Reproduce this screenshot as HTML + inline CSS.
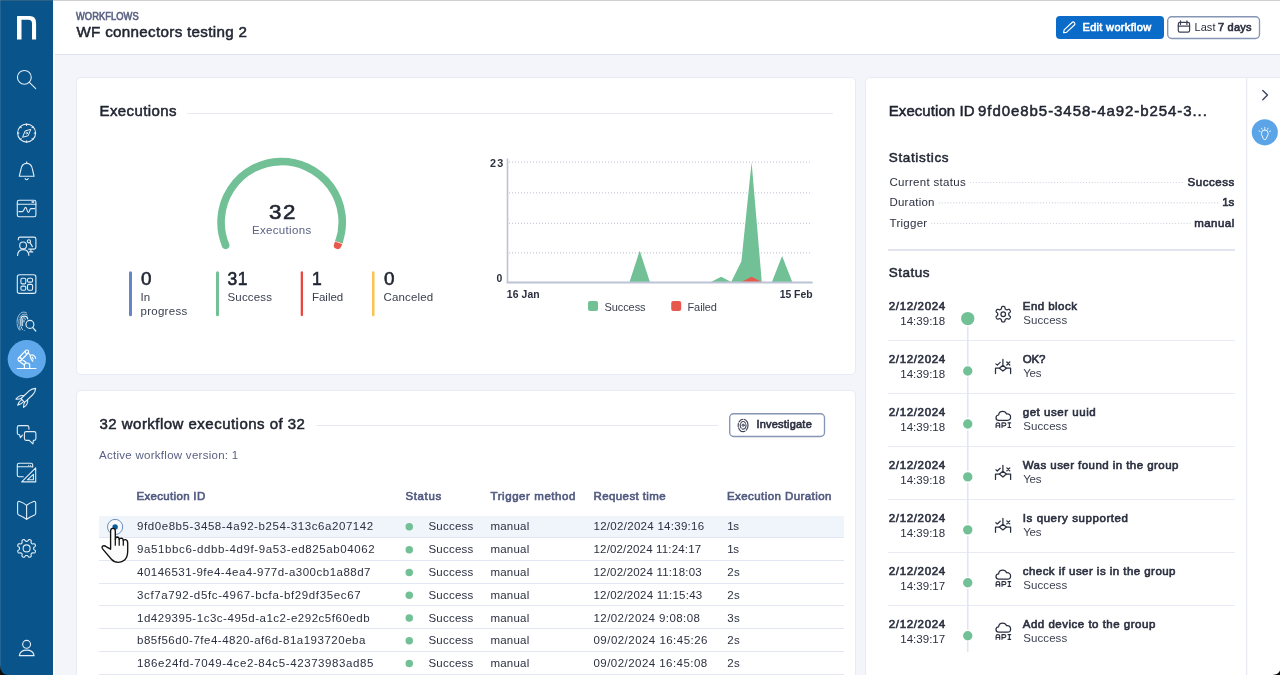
<!DOCTYPE html>
<html lang="en">
<head>
<meta charset="utf-8">
<title>WF connectors testing 2</title>
<style>
*{box-sizing:border-box;margin:0;padding:0}
html,body{width:1280px;height:675px;overflow:hidden;background:#f4f5fa;font-family:"Liberation Sans",sans-serif}
#app{position:relative;width:1280px;height:675px;overflow:hidden;background:#f4f5fa}
.abs{position:absolute}
#sidebar{left:0;top:0;width:53px;height:675px;background:#09558b}
#sidegap{left:53px;top:54px;width:2px;height:621px;background:#fff}
#header{left:53px;top:0;width:1227px;height:55px;background:#fff;border-bottom:1px solid #dde1ea}
#topline{left:0;top:0;width:1280px;height:1px;background:rgba(120,120,120,.35)}
.card{background:#fff;border:1px solid #e8eaf4;border-radius:5px}
#card1{left:76px;top:77px;width:780px;height:298px}
#card2{left:76px;top:390px;width:780px;height:300px}
#panel{left:865px;top:77px;width:420px;height:610px;border-radius:5px 0 0 0}
#rail{left:1246px;top:78px;width:1.6px;height:597px;background:#ebedf7}
.btn{border-radius:4px;height:23px}
#btnEdit{left:1056px;top:16px;width:108px;background:#0b6bc8}
#btnLast{left:1167px;top:16px;width:93px;background:#fff}
#btnInv{left:729px;top:413px;width:96px;height:24px;background:#fff;border-radius:4px}
.row{left:99px;width:745px;height:1px;background:#e3e7f3}
#rowsel{left:99px;top:516px;width:745px;height:21.5px;background:#f0f4fb}
.t{position:absolute;white-space:nowrap;line-height:1;display:block}
#txt{left:0;top:0;width:1280px;height:675px;will-change:transform}
#shapes{left:0;top:0;width:1280px;height:675px}
#corners{left:0;top:0;width:1280px;height:675px}
</style>
</head>
<body>
<div id="app">
<div id="sidebar" class="abs"></div>
<div id="header" class="abs"></div>
<div id="sidegap" class="abs"></div>
<div id="card1" class="abs card"></div>
<div id="card2" class="abs card"></div>
<div id="panel" class="abs card"></div>
<div id="btnEdit" class="abs btn"></div>
<div id="btnLast" class="abs btn"></div>
<div id="btnInv" class="abs"></div>
<div id="rowsel" class="abs"></div>
<div class="abs row" style="top:537.20px"></div><div class="abs row" style="top:559.95px"></div><div class="abs row" style="top:582.70px"></div><div class="abs row" style="top:605.45px"></div><div class="abs row" style="top:628.20px"></div><div class="abs row" style="top:650.95px"></div><div class="abs row" style="top:673.70px"></div>
<svg id="shapes" class="abs" viewBox="0 0 1280 675">
<path d="M17 39.5V16.3L18 15.9H29.3Q36.1 15.7 36.1 23V39.5H32V23.4Q32 19.7 28.4 19.7H21.5V39.5Z" fill="#fff"/>
<g stroke="#e4edf6" stroke-width="1.1" fill="none" stroke-linecap="round" stroke-linejoin="round"><circle cx="24.35" cy="77.35" r="6.9"/><path d="M29.4 82.4L35.7 88.7"/></g>
<g stroke="#e4edf6" stroke-width="1.1" fill="none" stroke-linecap="round" stroke-linejoin="round"><circle cx="26.6" cy="133.1" r="9"/><path d="M35.60 133.10L34.30 133.10M32.96 139.46L32.04 138.54M26.60 142.10L26.60 140.80M20.24 139.46L21.16 138.54M17.60 133.10L18.90 133.10M20.24 126.74L21.16 127.66M26.60 124.10L26.60 125.40M32.96 126.74L32.04 127.66" stroke-width="1.1"/><path d="M22.7 136.9L25.1 130.9L30.8 129.4L28.3 135.4Z" stroke-width="1"/><circle cx="26.7" cy="133.1" r=".9" stroke-width=".8"/></g>
<g stroke="#e4edf6" stroke-width="1.1" fill="none" stroke-linecap="round" stroke-linejoin="round"><path d="M19.3 176.3H34.1L32.5 169.5C32 165.5 29.6 163.4 26.7 163.4C23.8 163.4 21.4 165.5 20.9 169.5Z"/><path d="M26.7 163.4V161.8M25.1 178.6Q26.7 180.9 28.2 178.6"/></g>
<g stroke="#e4edf6" stroke-width="1.1" fill="none" stroke-linecap="round" stroke-linejoin="round"><rect x="17.3" y="200.3" width="18.6" height="16.4" rx="1.8"/><path d="M17.3 204.3H35.9"/><rect x="31.6" y="201.2" width="2.6" height="1.6" fill="#eaf1f8" stroke="none"/><path d="M18.9 211.6H22.4C24 211.6 24.4 207.4 25.6 207.4C27 207.4 27.1 212.5 28.3 212.5C29.5 212.5 29.6 208.6 31 208.6H34.6"/></g>
<g stroke="#e4edf6" stroke-width="1.1" fill="none" stroke-linecap="round" stroke-linejoin="round"><path d="M18.3 239.8V238.9Q18.3 237.1 20.1 237.1H34.1Q35.9 237.1 35.9 238.9V247.3Q35.9 249.1 34.1 249.1H28.6M30.9 249.1V251.9M29.4 251.9H32.8"/><circle cx="23.1" cy="245.4" r="3.4"/><path d="M17.6 255.5C17.8 251.7 20 249.6 23.2 249.6C26.4 249.6 28.6 251.7 28.9 255.5"/><circle cx="28.9" cy="241.3" r="1.6" stroke-width="1.1"/><path d="M30 242.6L32.4 246.6"/></g>
<g stroke="#e4edf6" stroke-width="1.1" fill="none" stroke-linecap="round" stroke-linejoin="round"><rect x="17.3" y="274.7" width="18.6" height="18.7" rx="2.2"/><rect x="20.9" y="278.3" width="4.9" height="5.6" rx="1.4" stroke-width="1.1"/><rect x="20.9" y="286.1" width="4.9" height="4.1" rx="1.4" stroke-width="1.1"/><rect x="27.5" y="278.3" width="5.1" height="3.8" rx="1.4" stroke-width="1.1"/><rect x="27.5" y="284.4" width="5.1" height="5.8" rx="1.4" stroke-width="1.1"/></g>
<g stroke="#e4edf6" fill="none" stroke-linecap="round" stroke-linejoin="round" stroke-width=".8"><path d="M19.6 330.2C18.2 328.6 17.4 326.4 17.1 323.6C16.6 317.6 19.4 312.1 23.8 312.1C24.9 312.1 26 312.4 26.9 313" stroke-dasharray="7 1.4 9 1.4 6" opacity=".85"/><path d="M20.2 329.6C19.3 327.4 18.9 324.6 18.9 321.8C18.9 317.6 21.2 314.1 24.4 314.1C26.7 314.1 28.6 315.5 29.6 317.8" stroke-dasharray="4 1.6 5 1.6 9" opacity=".8"/><path d="M20.9 325.8V319.6C20.9 317.2 22.4 316 24.3 316C26.1 316 27.5 317.1 27.7 318.9" stroke-width="1.25"/><path d="M22.6 325.8V320C22.6 318.4 23.1 317.7 23.9 317.7C24.6 317.7 25.2 318.3 25.3 319.4" stroke-width=".85"/><path d="M24 320.2V322M21.3 327.2C21.6 328.1 22 328.9 22.5 329.5M24.4 330.6L24.5 330.7" stroke-width=".9"/><circle cx="29.9" cy="324.4" r="3.95" stroke-width="1.15"/><path d="M32.8 327.6L35.7 330.9" stroke-width="1.4"/></g>
<circle cx="26.8" cy="359.2" r="19.1" fill="#5fa8ec"/>
<g stroke="#fff" stroke-width="1.15" fill="none" stroke-linecap="round" stroke-linejoin="round"><path d="M17.3 368.5H36M24.4 368.5V365.2Q24.4 363 27 363Q29.7 363 29.7 365.2V368.5"/><path d="M18.5 358L25.6 350.6M21 360.5L28.1 353M18.6 360.8L24.4 365M20.9 358.2L26 362.5"/><circle cx="19.7" cy="359.3" r="1.75"/><circle cx="26.9" cy="351.7" r="1.75"/><path d="M28.4 352.9L30.3 355.4M30.2 356.6C30.6 355 32.2 354.4 33.4 355.3C34.6 356.1 35.6 357 35.7 358.4M30.6 357.5C31 359 31.8 360.2 32.9 361.2M32.3 357.2L33.2 358.9"/></g>
<g transform="translate(26.9 396.6) rotate(47)" stroke="#e4edf6" stroke-width="1.1" fill="none" stroke-linecap="round" stroke-linejoin="round"><path d="M-2.6 5.6V-5.5C-2.6 -8.2 -1.4 -10.4 0 -12C1.4 -10.4 2.6 -8.2 2.6 -5.5V5.6Z"/><path d="M-2.6 1.5C-5 3 -6.2 6.2 -5.6 9.8C-4.2 8.6 -3.2 7.3 -2.6 5.6M2.6 1.5C5 3 6.2 6.2 5.6 9.8C4.2 8.6 3.2 7.3 2.6 5.6M-1.3 5.8C-1.8 8.2 -1.1 10.8 0 12.6C1.1 10.8 1.8 8.2 1.3 5.8"/></g>
<g stroke="#e4edf6" stroke-width="1.1" fill="none" stroke-linecap="round" stroke-linejoin="round"><path d="M28.9 429.3V427.4Q28.9 425.6 27.1 425.6H19.1Q17.3 425.6 17.3 427.4V432.9Q17.3 434.7 19.1 434.7H19.5L20.4 437.7L22.4 435.2"/><path d="M26.2 431.6H34.1Q35.9 431.6 35.9 433.4V438.6Q35.9 440.4 34.1 440.4H33.4L32.9 443.9L29.2 440.4H26.2Q24.4 440.4 24.4 438.6V433.4Q24.4 431.6 26.2 431.6Z"/></g>
<g stroke="#e4edf6" stroke-width="1.1" fill="none" stroke-linecap="round" stroke-linejoin="round"><path d="M23.3 476.7H19.1Q17.3 476.7 17.3 474.9V465.1Q17.3 463.3 19.1 463.3H30.9Q32.7 463.3 32.7 465.1V467.1M17.3 466.8H32.7"/><path d="M35.7 467.8V481.9H21.7ZM33.4 474.4V479.8H27.4Z"/><circle cx="28.6" cy="465.2" r=".55" fill="#eaf1f8" stroke="none"/><circle cx="30.4" cy="465.2" r=".55" fill="#eaf1f8" stroke="none"/></g>
<g stroke="#e4edf6" stroke-width="1.1" fill="none" stroke-linecap="round" stroke-linejoin="round"><path d="M26.6 505.3V519.4M26.6 505.3C24.5 503.5 22 502.3 19.6 501.5C18.4 501.1 17.6 501.8 17.6 502.9V513.2C17.6 514 18 514.5 18.8 514.9C21.5 516 24.2 517.5 26.6 519.4C29 517.5 31.7 516 34.5 514.9C35.3 514.5 35.7 514 35.7 513.2V502.9C35.7 501.8 34.9 501.1 33.7 501.5C31.3 502.3 28.8 503.5 26.6 505.3"/></g>
<g stroke="#e4edf6" stroke-width="1.1" fill="none" stroke-linecap="round" stroke-linejoin="round"><path d="M33.65 548.40 L33.65 548.58 L33.66 548.77 L33.68 548.96 L33.72 549.15 L33.83 549.35 L34.05 549.58 L34.42 549.85 L34.86 550.16 L35.21 550.47 L35.40 550.76 L35.46 551.02 L35.45 551.27 L35.40 551.52 L35.33 551.75 L35.24 551.98 L35.14 552.20 L35.02 552.42 L34.89 552.62 L34.72 552.81 L34.49 552.95 L34.15 553.03 L33.68 553.00 L33.16 552.91 L32.70 552.83 L32.38 552.84 L32.16 552.91 L32.00 553.01 L31.85 553.13 L31.72 553.26 L31.59 553.39 L31.46 553.52 L31.33 553.65 L31.21 553.80 L31.11 553.96 L31.04 554.18 L31.03 554.50 L31.11 554.96 L31.20 555.48 L31.23 555.95 L31.15 556.29 L31.01 556.52 L30.82 556.69 L30.62 556.82 L30.40 556.94 L30.18 557.04 L29.95 557.13 L29.72 557.20 L29.47 557.25 L29.22 557.26 L28.96 557.20 L28.67 557.01 L28.36 556.66 L28.05 556.22 L27.78 555.85 L27.55 555.63 L27.35 555.52 L27.16 555.48 L26.97 555.46 L26.78 555.45 L26.60 555.45 L26.42 555.45 L26.23 555.46 L26.04 555.48 L25.85 555.52 L25.65 555.63 L25.42 555.85 L25.15 556.22 L24.84 556.66 L24.53 557.01 L24.24 557.20 L23.98 557.26 L23.73 557.25 L23.48 557.20 L23.25 557.13 L23.02 557.04 L22.80 556.94 L22.58 556.82 L22.38 556.69 L22.19 556.52 L22.05 556.29 L21.97 555.95 L22.00 555.48 L22.09 554.96 L22.17 554.50 L22.16 554.18 L22.09 553.96 L21.99 553.80 L21.87 553.65 L21.74 553.52 L21.61 553.39 L21.48 553.26 L21.35 553.13 L21.20 553.01 L21.04 552.91 L20.82 552.84 L20.50 552.83 L20.04 552.91 L19.52 553.00 L19.05 553.03 L18.71 552.95 L18.48 552.81 L18.31 552.62 L18.18 552.42 L18.06 552.20 L17.96 551.98 L17.87 551.75 L17.80 551.52 L17.75 551.27 L17.74 551.02 L17.80 550.76 L17.99 550.47 L18.34 550.16 L18.78 549.85 L19.15 549.58 L19.37 549.35 L19.48 549.15 L19.52 548.96 L19.54 548.77 L19.55 548.58 L19.55 548.40 L19.55 548.22 L19.54 548.03 L19.52 547.84 L19.48 547.65 L19.37 547.45 L19.15 547.22 L18.78 546.95 L18.34 546.64 L17.99 546.33 L17.80 546.04 L17.74 545.78 L17.75 545.53 L17.80 545.28 L17.87 545.05 L17.96 544.82 L18.06 544.60 L18.18 544.38 L18.31 544.18 L18.48 543.99 L18.71 543.85 L19.05 543.77 L19.52 543.80 L20.04 543.89 L20.50 543.97 L20.82 543.96 L21.04 543.89 L21.20 543.79 L21.35 543.67 L21.48 543.54 L21.61 543.41 L21.74 543.28 L21.87 543.15 L21.99 543.00 L22.09 542.84 L22.16 542.62 L22.17 542.30 L22.09 541.84 L22.00 541.32 L21.97 540.85 L22.05 540.51 L22.19 540.28 L22.38 540.11 L22.58 539.98 L22.80 539.86 L23.02 539.76 L23.25 539.67 L23.48 539.60 L23.73 539.55 L23.98 539.54 L24.24 539.60 L24.53 539.79 L24.84 540.14 L25.15 540.58 L25.42 540.95 L25.65 541.17 L25.85 541.28 L26.04 541.32 L26.23 541.34 L26.42 541.35 L26.60 541.35 L26.78 541.35 L26.97 541.34 L27.16 541.32 L27.35 541.28 L27.55 541.17 L27.78 540.95 L28.05 540.58 L28.36 540.14 L28.67 539.79 L28.96 539.60 L29.22 539.54 L29.47 539.55 L29.72 539.60 L29.95 539.67 L30.18 539.76 L30.40 539.86 L30.62 539.98 L30.82 540.11 L31.01 540.28 L31.15 540.51 L31.23 540.85 L31.20 541.32 L31.11 541.84 L31.03 542.30 L31.04 542.62 L31.11 542.84 L31.21 543.00 L31.33 543.15 L31.46 543.28 L31.59 543.41 L31.72 543.54 L31.85 543.67 L32.00 543.79 L32.16 543.89 L32.38 543.96 L32.70 543.97 L33.16 543.89 L33.68 543.80 L34.15 543.77 L34.49 543.85 L34.72 543.99 L34.89 544.18 L35.02 544.38 L35.14 544.60 L35.24 544.82 L35.33 545.05 L35.40 545.28 L35.45 545.53 L35.46 545.78 L35.40 546.04 L35.21 546.33 L34.86 546.64 L34.42 546.95 L34.05 547.22 L33.83 547.45 L33.72 547.65 L33.68 547.84 L33.66 548.03 L33.65 548.22Z"/><circle cx="26.6" cy="548.4" r="3.5"/></g>
<g stroke="#e4edf6" stroke-width="1.1" fill="none" stroke-linecap="round" stroke-linejoin="round"><circle cx="26.6" cy="644.35" r="3.95"/><path d="M19.3 655.6C19.9 652.2 22.8 650.1 26.7 650.1C30.6 650.1 33.5 652.2 34.1 655.6Z"/></g>
<rect x="0" y="0" width="1" height="675" fill="#fff" opacity=".1"/><path d="M187.5 113.5H833M316.5 425.5H718" stroke="#e6e8f3" stroke-width="1" fill="none"/>
<path d="M339.28 240.88 A60.6 60.6 0 0 1 337.64 245.34" stroke="#e9584d" stroke-width="7.6" stroke-linecap="round" fill="none"/>
<path d="M225.66 245.34 A60.6 60.6 0 1 1 338.88 242.08" stroke="#72c096" stroke-width="7.6" fill="none"/>
<circle cx="225.66" cy="245.34" r="3.8" fill="#72c096"/>
<path d="M338.88 242.08 A60.6 60.6 0 0 1 338.60 242.88" stroke="#fff" stroke-width="8.6" fill="none" opacity=".85"/>
<rect x="129" y="271.2" width="3" height="45" rx="1.5" fill="#6585c7"/>
<rect x="216" y="271.2" width="3" height="45" rx="1.5" fill="#72c096"/>
<rect x="300.7" y="271.2" width="2.3" height="45" rx="1.1" fill="#e8483f"/>
<rect x="372" y="271.2" width="2.5" height="45" rx="1.2" fill="#f9c550"/>
<path d="M509 162.2H811.8" stroke="#c7ccd9" stroke-width="1.2" stroke-dasharray="1 2" fill="none"/>
<path d="M509 192.8H811.8" stroke="#c7ccd9" stroke-width="1.2" stroke-dasharray="1 2" fill="none"/>
<path d="M509 223.4H811.8" stroke="#c7ccd9" stroke-width="1.2" stroke-dasharray="1 2" fill="none"/>
<path d="M509 252.9H811.8" stroke="#c7ccd9" stroke-width="1.2" stroke-dasharray="1 2" fill="none"/>
<path d="M507.5 282.0 L517.7 282.0 L527.8 282.0 L538.0 282.0 L548.2 282.0 L558.4 282.0 L568.5 282.0 L578.7 282.0 L588.9 282.0 L599.0 282.0 L609.2 282.0 L619.4 282.0 L629.5 282.0 L639.7 250.7 L649.9 282.0 L660.0 282.0 L670.2 282.0 L680.4 282.0 L690.6 282.0 L700.7 282.0 L710.9 282.0 L721.1 276.8 L731.2 282.0 L741.4 261.2 L751.6 162.2 L761.8 282.0 L771.9 282.0 L782.1 256.0 L792.3 282.0 L802.4 282.0 L812.6 282.0 L812.6 282 L507.5 282Z" fill="#72c096"/>
<path d="M741.4 282 L751.6 276.8 L761.8 282Z" fill="#e9584d"/>
<path d="M507.5 158.5V283" stroke="#bcc3d6" stroke-width="1.6" fill="none"/>
<path d="M506.7 282.4H812.6" stroke="#bcc3d6" stroke-width="2" fill="none"/>
<rect x="588" y="301" width="10" height="10" rx="2" fill="#72c096"/>
<rect x="671.2" y="301" width="10" height="10" rx="2" fill="#e9584d"/>
<circle cx="409.25" cy="526.75" r="3.75" fill="#72c096"/>
<circle cx="409.25" cy="549.80" r="3.75" fill="#72c096"/>
<circle cx="409.25" cy="572.55" r="3.75" fill="#72c096"/>
<circle cx="409.25" cy="595.30" r="3.75" fill="#72c096"/>
<circle cx="409.25" cy="618.05" r="3.75" fill="#72c096"/>
<circle cx="409.25" cy="640.80" r="3.75" fill="#72c096"/>
<circle cx="409.25" cy="663.55" r="3.75" fill="#72c096"/>
<circle cx="115.1" cy="526.95" r="7.6" fill="#f8fafe" stroke="#6a8fbd" stroke-width="1"/>
<circle cx="115.1" cy="526.95" r="2.7" fill="#0b5a9a"/>
<path d="M970 182.5H1184" stroke="#cfd3e0" stroke-width="1.2" stroke-dasharray="1 1.9" fill="none"/>
<path d="M938.75 202.9H1218.5" stroke="#cfd3e0" stroke-width="1.2" stroke-dasharray="1 1.9" fill="none"/>
<path d="M931.25 223.5H1191" stroke="#cfd3e0" stroke-width="1.2" stroke-dasharray="1 1.9" fill="none"/>
<path d="M888 250H1235" stroke="#d9dcea" stroke-width="1.6" fill="none"/>
<path d="M888 340.50H1235" stroke="#e8eaf5" stroke-width="1.2" fill="none"/>
<path d="M888 393.50H1235" stroke="#e8eaf5" stroke-width="1.2" fill="none"/>
<path d="M888 446.50H1235" stroke="#e8eaf5" stroke-width="1.2" fill="none"/>
<path d="M888 499.50H1235" stroke="#e8eaf5" stroke-width="1.2" fill="none"/>
<path d="M888 552.50H1235" stroke="#e8eaf5" stroke-width="1.2" fill="none"/>
<path d="M888 605.50H1235" stroke="#e8eaf5" stroke-width="1.2" fill="none"/>
<path d="M967.75 318V652" stroke="#e1e4f2" stroke-width="1.6" fill="none"/>
<circle cx="967.75" cy="318.6" r="7.4" fill="#72c096" stroke="#fff" stroke-width="1.4"/>
<circle cx="967.75" cy="371.00" r="5.4" fill="#72c096" stroke="#fff" stroke-width="1.4"/>
<circle cx="967.75" cy="423.95" r="5.4" fill="#72c096" stroke="#fff" stroke-width="1.4"/>
<circle cx="967.75" cy="476.90" r="5.4" fill="#72c096" stroke="#fff" stroke-width="1.4"/>
<circle cx="967.75" cy="529.85" r="5.4" fill="#72c096" stroke="#fff" stroke-width="1.4"/>
<circle cx="967.75" cy="582.80" r="5.4" fill="#72c096" stroke="#fff" stroke-width="1.4"/>
<circle cx="967.75" cy="635.75" r="5.4" fill="#72c096" stroke="#fff" stroke-width="1.4"/>
<path d="M1008.75 314.20 L1008.75 314.34 L1008.75 314.49 L1008.75 314.63 L1008.76 314.78 L1008.77 314.93 L1008.82 315.08 L1008.91 315.25 L1009.07 315.44 L1009.34 315.66 L1009.67 315.92 L1010.00 316.20 L1010.24 316.47 L1010.36 316.72 L1010.40 316.95 L1010.39 317.16 L1010.34 317.36 L1010.27 317.55 L1010.19 317.74 L1010.10 317.92 L1010.00 318.10 L1009.90 318.27 L1009.79 318.44 L1009.66 318.61 L1009.53 318.76 L1009.38 318.90 L1009.21 319.02 L1008.99 319.10 L1008.71 319.12 L1008.36 319.05 L1007.95 318.90 L1007.56 318.74 L1007.23 318.62 L1006.99 318.57 L1006.80 318.58 L1006.64 318.62 L1006.50 318.68 L1006.38 318.75 L1006.25 318.82 L1006.12 318.89 L1006.00 318.96 L1005.88 319.03 L1005.75 319.11 L1005.63 319.18 L1005.50 319.26 L1005.38 319.35 L1005.27 319.46 L1005.17 319.62 L1005.09 319.86 L1005.03 320.20 L1004.97 320.62 L1004.89 321.05 L1004.78 321.39 L1004.63 321.62 L1004.45 321.77 L1004.26 321.86 L1004.06 321.92 L1003.86 321.96 L1003.66 321.98 L1003.45 322.00 L1003.25 322.00 L1003.05 322.00 L1002.84 321.98 L1002.64 321.96 L1002.44 321.92 L1002.24 321.86 L1002.05 321.77 L1001.87 321.62 L1001.72 321.39 L1001.61 321.05 L1001.53 320.62 L1001.47 320.20 L1001.41 319.86 L1001.33 319.62 L1001.23 319.46 L1001.12 319.35 L1001.00 319.26 L1000.87 319.18 L1000.75 319.11 L1000.62 319.03 L1000.50 318.96 L1000.38 318.89 L1000.25 318.82 L1000.12 318.75 L1000.00 318.68 L999.86 318.62 L999.70 318.58 L999.51 318.57 L999.27 318.62 L998.94 318.74 L998.55 318.90 L998.14 319.05 L997.79 319.12 L997.51 319.10 L997.29 319.02 L997.12 318.90 L996.97 318.76 L996.84 318.61 L996.71 318.44 L996.60 318.27 L996.50 318.10 L996.40 317.92 L996.31 317.74 L996.23 317.55 L996.16 317.36 L996.11 317.16 L996.10 316.95 L996.14 316.72 L996.26 316.47 L996.50 316.20 L996.83 315.92 L997.16 315.66 L997.43 315.44 L997.59 315.25 L997.68 315.08 L997.73 314.93 L997.74 314.78 L997.75 314.63 L997.75 314.49 L997.75 314.34 L997.75 314.20 L997.75 314.06 L997.75 313.91 L997.75 313.77 L997.74 313.62 L997.73 313.47 L997.68 313.32 L997.59 313.15 L997.43 312.96 L997.16 312.74 L996.83 312.48 L996.50 312.20 L996.26 311.93 L996.14 311.68 L996.10 311.45 L996.11 311.24 L996.16 311.04 L996.23 310.85 L996.31 310.66 L996.40 310.48 L996.50 310.30 L996.60 310.13 L996.71 309.96 L996.84 309.79 L996.97 309.64 L997.12 309.50 L997.29 309.38 L997.51 309.30 L997.79 309.28 L998.14 309.35 L998.55 309.50 L998.94 309.66 L999.27 309.78 L999.51 309.83 L999.70 309.82 L999.86 309.78 L1000.00 309.72 L1000.12 309.65 L1000.25 309.58 L1000.38 309.51 L1000.50 309.44 L1000.62 309.37 L1000.75 309.29 L1000.87 309.22 L1001.00 309.14 L1001.12 309.05 L1001.23 308.94 L1001.33 308.78 L1001.41 308.54 L1001.47 308.20 L1001.53 307.78 L1001.61 307.35 L1001.72 307.01 L1001.87 306.78 L1002.05 306.63 L1002.24 306.54 L1002.44 306.48 L1002.64 306.44 L1002.84 306.42 L1003.05 306.40 L1003.25 306.40 L1003.45 306.40 L1003.66 306.42 L1003.86 306.44 L1004.06 306.48 L1004.26 306.54 L1004.45 306.63 L1004.63 306.78 L1004.78 307.01 L1004.89 307.35 L1004.97 307.78 L1005.03 308.20 L1005.09 308.54 L1005.17 308.78 L1005.27 308.94 L1005.38 309.05 L1005.50 309.14 L1005.63 309.22 L1005.75 309.29 L1005.88 309.37 L1006.00 309.44 L1006.12 309.51 L1006.25 309.58 L1006.38 309.65 L1006.50 309.72 L1006.64 309.78 L1006.80 309.82 L1006.99 309.83 L1007.23 309.78 L1007.56 309.66 L1007.95 309.50 L1008.36 309.35 L1008.71 309.28 L1008.99 309.30 L1009.21 309.38 L1009.38 309.50 L1009.53 309.64 L1009.66 309.79 L1009.79 309.96 L1009.90 310.13 L1010.00 310.30 L1010.10 310.48 L1010.19 310.66 L1010.27 310.85 L1010.34 311.04 L1010.39 311.24 L1010.40 311.45 L1010.36 311.68 L1010.24 311.93 L1010.00 312.20 L1009.67 312.48 L1009.34 312.74 L1009.07 312.96 L1008.91 313.15 L1008.82 313.32 L1008.77 313.47 L1008.76 313.62 L1008.75 313.77 L1008.75 313.91 L1008.75 314.06Z" stroke="#2b3040" stroke-width="1.25" fill="none" stroke-linecap="round" stroke-linejoin="round"/>
<circle cx="1003.25" cy="314.2" r="2.3" stroke="#2b3040" stroke-width="1.25" fill="none" stroke-linecap="round" stroke-linejoin="round"/>
<g transform="translate(0 0.00)" stroke="#2b3040" stroke-width="1.25" fill="none" stroke-linecap="round" stroke-linejoin="round"><path d="M1002.9 359.4V365.2M1002.9 365.3L1006.4 368.2L1002.9 371.1L999.4 368.2Z"/><path d="M999.4 368.2H995.5V373.5M1006.4 368.2H1010.6V373.5"/><path d="M995.9 363.9L997.3 365.1L1000.2 362.4"/><path d="M1006.8 362L1009.8 365M1009.8 362L1006.8 365"/></g>
<g transform="translate(0 105.90)" stroke="#2b3040" stroke-width="1.25" fill="none" stroke-linecap="round" stroke-linejoin="round"><path d="M1002.9 359.4V365.2M1002.9 365.3L1006.4 368.2L1002.9 371.1L999.4 368.2Z"/><path d="M999.4 368.2H995.5V373.5M1006.4 368.2H1010.6V373.5"/><path d="M995.9 363.9L997.3 365.1L1000.2 362.4"/><path d="M1006.8 362L1009.8 365M1009.8 362L1006.8 365"/></g>
<g transform="translate(0 158.85)" stroke="#2b3040" stroke-width="1.25" fill="none" stroke-linecap="round" stroke-linejoin="round"><path d="M1002.9 359.4V365.2M1002.9 365.3L1006.4 368.2L1002.9 371.1L999.4 368.2Z"/><path d="M999.4 368.2H995.5V373.5M1006.4 368.2H1010.6V373.5"/><path d="M995.9 363.9L997.3 365.1L1000.2 362.4"/><path d="M1006.8 362L1009.8 365M1009.8 362L1006.8 365"/></g>
<g transform="translate(0 0.00)" stroke="#2b3040" stroke-width="1.25" fill="none" stroke-linecap="round" stroke-linejoin="round"><path d="M998.8 420.3H1007.6C1009.6 420.3 1010.6 418.8 1010.6 417.1C1010.6 415 1008.8 413.4 1006.6 413.9C1006 412.4 1004.5 411.3 1002.7 411.3C1000.5 411.3 998.8 412.9 998.6 415C997.1 415.1 996 416.2 996 417.7C996 419.2 997.2 420.3 998.8 420.3Z"/><path stroke-width="1.15" d="M996.1 427.5V424.4Q996.1 422.8 997.9 422.8Q999.7 422.8 999.7 424.4V427.5M996.1 425.7H999.7M1002 427.5V422.8H1004.2Q1005.9 422.8 1005.9 424.3Q1005.9 425.8 1004.2 425.8H1002M1008 422.8H1010.7M1009.35 422.8V427.5M1008 427.5H1010.7"/></g>
<g transform="translate(0 158.85)" stroke="#2b3040" stroke-width="1.25" fill="none" stroke-linecap="round" stroke-linejoin="round"><path d="M998.8 420.3H1007.6C1009.6 420.3 1010.6 418.8 1010.6 417.1C1010.6 415 1008.8 413.4 1006.6 413.9C1006 412.4 1004.5 411.3 1002.7 411.3C1000.5 411.3 998.8 412.9 998.6 415C997.1 415.1 996 416.2 996 417.7C996 419.2 997.2 420.3 998.8 420.3Z"/><path stroke-width="1.15" d="M996.1 427.5V424.4Q996.1 422.8 997.9 422.8Q999.7 422.8 999.7 424.4V427.5M996.1 425.7H999.7M1002 427.5V422.8H1004.2Q1005.9 422.8 1005.9 424.3Q1005.9 425.8 1004.2 425.8H1002M1008 422.8H1010.7M1009.35 422.8V427.5M1008 427.5H1010.7"/></g>
<g transform="translate(0 211.80)" stroke="#2b3040" stroke-width="1.25" fill="none" stroke-linecap="round" stroke-linejoin="round"><path d="M998.8 420.3H1007.6C1009.6 420.3 1010.6 418.8 1010.6 417.1C1010.6 415 1008.8 413.4 1006.6 413.9C1006 412.4 1004.5 411.3 1002.7 411.3C1000.5 411.3 998.8 412.9 998.6 415C997.1 415.1 996 416.2 996 417.7C996 419.2 997.2 420.3 998.8 420.3Z"/><path stroke-width="1.15" d="M996.1 427.5V424.4Q996.1 422.8 997.9 422.8Q999.7 422.8 999.7 424.4V427.5M996.1 425.7H999.7M1002 427.5V422.8H1004.2Q1005.9 422.8 1005.9 424.3Q1005.9 425.8 1004.2 425.8H1002M1008 422.8H1010.7M1009.35 422.8V427.5M1008 427.5H1010.7"/></g>
<path d="M1246.7 78V675" stroke="#e7e9f5" stroke-width="1.2" fill="none"/>
<path d="M1262.8 90.4L1267.5 95L1262.8 99.7" stroke="#3f4463" stroke-width="1.4" fill="none" stroke-linecap="round" stroke-linejoin="round"/>
<circle cx="1264.8" cy="132.35" r="13.05" fill="#5ba4e8"/>
<g stroke="#f2f8fe" stroke-width="1" fill="none" stroke-linecap="round" stroke-linejoin="round"><path d="M1264.8 129.9A3.4 3.4 0 0 1 1268.2 133.3C1268.2 135.6 1266.8 136.4 1266.5 138.4Q1266.3 139.5 1264.8 139.5Q1263.3 139.5 1263.1 138.4C1262.8 136.4 1261.4 135.6 1261.4 133.3A3.4 3.4 0 0 1 1264.8 129.9Z"/><path stroke-width=".9" d="M1264.8 127.3V128.5M1261.5 128.2L1262.1 129.3M1268.1 128.2L1267.5 129.3M1259 131L1260.1 131.4M1270.6 131L1269.5 131.4"/></g>
<rect x="1167.7" y="16.7" width="91.8" height="21.8" rx="4" fill="none" stroke="#8595b4" stroke-width="1.35"/>
<rect x="729.7" y="413.7" width="94.8" height="22.8" rx="4" fill="none" stroke="#8595b4" stroke-width="1.35"/>
<g transform="translate(1069.4 27.3) rotate(-43)" stroke="#fff" stroke-width="1.15" fill="none" stroke-linejoin="round"><path d="M-5.6 -1.7H5.2Q6.9 -1.7 6.9 0Q6.9 1.7 5.2 1.7H-5.6L-7.9 0Z"/></g>
<g stroke="#3c4155" stroke-width="1.2" fill="none" stroke-linecap="round"><rect x="1178.3" y="22.3" width="11.3" height="9.8" rx="1.6"/><path d="M1178.3 26.2H1189.6M1180.5 20.9V24.4M1186.9 20.9V24.4"/></g>
<g stroke="#3c4155" stroke-width="1" fill="none" stroke-linecap="round"><ellipse cx="743.1" cy="425.4" rx="4.9" ry="6.2" stroke-width="1.15" stroke-dasharray="5 1.6 8 1.4 3 1.5"/><ellipse cx="743.1" cy="425.3" rx="2.9" ry="3.8" stroke-width="1.1" stroke-dasharray="6 1.3 4 1.2"/><circle cx="743.1" cy="425.2" r="1.1" /></g>
</svg>
<div id="txt" class="abs">
<span class="t" style="left:75.50px;top:12.30px;font-size:10px;font-weight:400;color:#5a6284;-webkit-text-stroke:0.59px #5a6284;letter-spacing:0.080px;transform:scaleX(0.93);transform-origin:0 0;">WORKFLOWS</span>
<span class="t" style="left:76.40px;top:24.00px;font-size:15.2px;font-weight:400;color:#1f2430;-webkit-text-stroke:0.53px #1f2430;letter-spacing:0.311px;">WF connectors testing 2</span>
<span class="t" style="left:1082.50px;top:21.50px;font-size:11px;font-weight:400;color:#ffffff;-webkit-text-stroke:0.61px #ffffff;letter-spacing:0.322px;">Edit workflow</span>
<span class="t" style="left:1194.50px;top:21.50px;font-size:11px;font-weight:400;color:#2b3040;letter-spacing:0.054px;">Last</span>
<span class="t" style="left:1218.00px;top:21.50px;font-size:11px;font-weight:400;color:#2b3040;-webkit-text-stroke:0.61px #2b3040;letter-spacing:0.208px;">7 days</span>
<span class="t" style="left:99.50px;top:103.10px;font-size:15px;font-weight:400;color:#1f2430;-webkit-text-stroke:0.53px #1f2430;letter-spacing:0.392px;">Executions</span>
<span class="t" style="left:268.50px;top:202.15px;font-size:20.3px;font-weight:400;color:#1f2430;-webkit-text-stroke:0.62px #1f2430;letter-spacing:1.454px;transform:scaleX(1.1);transform-origin:0 0;">32</span>
<span class="t" style="left:251.90px;top:224.65px;font-size:11.5px;font-weight:400;color:#5a6284;letter-spacing:0.336px;">Executions</span>
<span class="t" style="left:141.00px;top:270.75px;font-size:17.5px;font-weight:400;color:#1f2430;-webkit-text-stroke:0.57px #1f2430;letter-spacing:0.000px;transform:scaleX(1.08);transform-origin:0 0;">0</span>
<span class="t" style="left:227.50px;top:270.75px;font-size:17.5px;font-weight:400;color:#1f2430;-webkit-text-stroke:0.57px #1f2430;letter-spacing:0.581px;">31</span>
<span class="t" style="left:312.00px;top:270.75px;font-size:17.5px;font-weight:400;color:#1f2430;-webkit-text-stroke:0.57px #1f2430;letter-spacing:0.000px;">1</span>
<span class="t" style="left:383.50px;top:270.75px;font-size:17.5px;font-weight:400;color:#1f2430;-webkit-text-stroke:0.57px #1f2430;letter-spacing:0.000px;transform:scaleX(1.08);transform-origin:0 0;">0</span>
<span class="t" style="left:140.50px;top:291.50px;font-size:11.5px;font-weight:400;color:#3c4150;letter-spacing:0.096px;">In</span>
<span class="t" style="left:140.50px;top:306.25px;font-size:11.5px;font-weight:400;color:#3c4150;letter-spacing:0.277px;">progress</span>
<span class="t" style="left:227.50px;top:291.50px;font-size:11.5px;font-weight:400;color:#3c4150;letter-spacing:0.162px;">Success</span>
<span class="t" style="left:312.00px;top:291.50px;font-size:11.5px;font-weight:400;color:#3c4150;letter-spacing:-0.028px;">Failed</span>
<span class="t" style="left:383.50px;top:291.50px;font-size:11.5px;font-weight:400;color:#3c4150;letter-spacing:0.157px;">Canceled</span>
<span class="t" style="left:490.10px;top:158.70px;font-size:10.4px;font-weight:700;color:#2b3040;letter-spacing:1.153px;transform:scaleX(1.04);transform-origin:0 0;">23</span>
<span class="t" style="left:496.60px;top:274.30px;font-size:10.4px;font-weight:700;color:#2b3040;letter-spacing:0.000px;">0</span>
<span class="t" style="left:506.80px;top:290.30px;font-size:10.4px;font-weight:700;color:#2b3040;letter-spacing:0.113px;">16 Jan</span>
<span class="t" style="left:779.80px;top:290.30px;font-size:10.4px;font-weight:700;color:#2b3040;letter-spacing:-0.040px;">15 Feb</span>
<span class="t" style="left:604.50px;top:301.70px;font-size:11px;font-weight:400;color:#3c4150;letter-spacing:-0.086px;">Success</span>
<span class="t" style="left:687.50px;top:301.70px;font-size:11px;font-weight:400;color:#3c4150;letter-spacing:-0.102px;">Failed</span>
<span class="t" style="left:99.50px;top:416.10px;font-size:15px;font-weight:400;color:#1f2430;-webkit-text-stroke:0.53px #1f2430;letter-spacing:0.474px;">32 workflow executions of 32</span>
<span class="t" style="left:99.00px;top:449.50px;font-size:11.5px;font-weight:400;color:#5a6284;letter-spacing:0.276px;">Active workflow version: 1</span>
<span class="t" style="left:756.40px;top:419.00px;font-size:11px;font-weight:400;color:#2b3040;-webkit-text-stroke:0.61px #2b3040;letter-spacing:0.216px;">Investigate</span>
<span class="t" style="left:136.50px;top:490.85px;font-size:11.5px;font-weight:400;color:#525a80;-webkit-text-stroke:0.62px #525a80;letter-spacing:0.317px;">Execution ID</span>
<span class="t" style="left:405.50px;top:490.85px;font-size:11.5px;font-weight:400;color:#525a80;-webkit-text-stroke:0.62px #525a80;letter-spacing:0.616px;">Status</span>
<span class="t" style="left:490.50px;top:490.85px;font-size:11.5px;font-weight:400;color:#525a80;-webkit-text-stroke:0.62px #525a80;letter-spacing:0.567px;">Trigger method</span>
<span class="t" style="left:593.50px;top:490.85px;font-size:11.5px;font-weight:400;color:#525a80;-webkit-text-stroke:0.62px #525a80;letter-spacing:0.402px;">Request time</span>
<span class="t" style="left:727.00px;top:490.85px;font-size:11.5px;font-weight:400;color:#525a80;-webkit-text-stroke:0.62px #525a80;letter-spacing:0.428px;">Execution Duration</span>
<span class="t" style="left:137.00px;top:521.05px;font-size:11.5px;font-weight:400;color:#2b3040;letter-spacing:0.573px;">9fd0e8b5-3458-4a92-b254-313c6a207142</span>
<span class="t" style="left:428.50px;top:521.05px;font-size:11.5px;font-weight:400;color:#2b3040;letter-spacing:0.204px;">Success</span>
<span class="t" style="left:490.50px;top:521.05px;font-size:11.5px;font-weight:400;color:#2b3040;letter-spacing:0.194px;">manual</span>
<span class="t" style="left:593.50px;top:521.05px;font-size:11.5px;font-weight:400;color:#2b3040;letter-spacing:0.287px;">12/02/2024 14:39:16</span>
<span class="t" style="left:727.25px;top:521.05px;font-size:11.5px;font-weight:400;color:#2b3040;letter-spacing:-0.350px;">1s</span>
<span class="t" style="left:137.00px;top:544.40px;font-size:11.5px;font-weight:400;color:#2b3040;letter-spacing:0.616px;">9a51bbc6-ddbb-4d9f-9a53-ed825ab04062</span>
<span class="t" style="left:428.50px;top:544.40px;font-size:11.5px;font-weight:400;color:#2b3040;letter-spacing:0.204px;">Success</span>
<span class="t" style="left:490.50px;top:544.40px;font-size:11.5px;font-weight:400;color:#2b3040;letter-spacing:0.194px;">manual</span>
<span class="t" style="left:593.50px;top:544.40px;font-size:11.5px;font-weight:400;color:#2b3040;letter-spacing:0.168px;">12/02/2024 11:24:17</span>
<span class="t" style="left:727.25px;top:544.40px;font-size:11.5px;font-weight:400;color:#2b3040;letter-spacing:-0.350px;">1s</span>
<span class="t" style="left:137.00px;top:567.15px;font-size:11.5px;font-weight:400;color:#2b3040;letter-spacing:0.496px;">40146531-9fe4-4ea4-977d-a300cb1a88d7</span>
<span class="t" style="left:428.50px;top:567.15px;font-size:11.5px;font-weight:400;color:#2b3040;letter-spacing:0.204px;">Success</span>
<span class="t" style="left:490.50px;top:567.15px;font-size:11.5px;font-weight:400;color:#2b3040;letter-spacing:0.194px;">manual</span>
<span class="t" style="left:593.50px;top:567.15px;font-size:11.5px;font-weight:400;color:#2b3040;letter-spacing:0.195px;">12/02/2024 11:18:03</span>
<span class="t" style="left:727.25px;top:567.15px;font-size:11.5px;font-weight:400;color:#2b3040;letter-spacing:0.284px;">2s</span>
<span class="t" style="left:137.00px;top:589.90px;font-size:11.5px;font-weight:400;color:#2b3040;letter-spacing:0.634px;">3cf7a792-d5fc-4967-bcfa-bf29df35ec67</span>
<span class="t" style="left:428.50px;top:589.90px;font-size:11.5px;font-weight:400;color:#2b3040;letter-spacing:0.204px;">Success</span>
<span class="t" style="left:490.50px;top:589.90px;font-size:11.5px;font-weight:400;color:#2b3040;letter-spacing:0.194px;">manual</span>
<span class="t" style="left:593.50px;top:589.90px;font-size:11.5px;font-weight:400;color:#2b3040;letter-spacing:0.223px;">12/02/2024 11:15:43</span>
<span class="t" style="left:727.25px;top:589.90px;font-size:11.5px;font-weight:400;color:#2b3040;letter-spacing:0.284px;">2s</span>
<span class="t" style="left:137.00px;top:612.65px;font-size:11.5px;font-weight:400;color:#2b3040;letter-spacing:0.525px;">1d429395-1c3c-495d-a1c2-e292c5f60edb</span>
<span class="t" style="left:428.50px;top:612.65px;font-size:11.5px;font-weight:400;color:#2b3040;letter-spacing:0.204px;">Success</span>
<span class="t" style="left:490.50px;top:612.65px;font-size:11.5px;font-weight:400;color:#2b3040;letter-spacing:0.194px;">manual</span>
<span class="t" style="left:593.50px;top:612.65px;font-size:11.5px;font-weight:400;color:#2b3040;letter-spacing:0.430px;">12/02/2024 9:08:08</span>
<span class="t" style="left:727.25px;top:612.65px;font-size:11.5px;font-weight:400;color:#2b3040;letter-spacing:0.284px;">3s</span>
<span class="t" style="left:137.00px;top:635.40px;font-size:11.5px;font-weight:400;color:#2b3040;letter-spacing:0.514px;">b85f56d0-7fe4-4820-af6d-81a193720eba</span>
<span class="t" style="left:428.50px;top:635.40px;font-size:11.5px;font-weight:400;color:#2b3040;letter-spacing:0.204px;">Success</span>
<span class="t" style="left:490.50px;top:635.40px;font-size:11.5px;font-weight:400;color:#2b3040;letter-spacing:0.194px;">manual</span>
<span class="t" style="left:593.50px;top:635.40px;font-size:11.5px;font-weight:400;color:#2b3040;letter-spacing:0.467px;">09/02/2024 16:45:26</span>
<span class="t" style="left:727.25px;top:635.40px;font-size:11.5px;font-weight:400;color:#2b3040;letter-spacing:0.284px;">2s</span>
<span class="t" style="left:137.00px;top:658.15px;font-size:11.5px;font-weight:400;color:#2b3040;letter-spacing:0.600px;">186e24fd-7049-4ce2-84c5-42373983ad85</span>
<span class="t" style="left:428.50px;top:658.15px;font-size:11.5px;font-weight:400;color:#2b3040;letter-spacing:0.204px;">Success</span>
<span class="t" style="left:490.50px;top:658.15px;font-size:11.5px;font-weight:400;color:#2b3040;letter-spacing:0.194px;">manual</span>
<span class="t" style="left:593.50px;top:658.15px;font-size:11.5px;font-weight:400;color:#2b3040;letter-spacing:0.453px;">09/02/2024 16:45:08</span>
<span class="t" style="left:727.25px;top:658.15px;font-size:11.5px;font-weight:400;color:#2b3040;letter-spacing:0.284px;">2s</span>
<span class="t" style="left:888.75px;top:102.90px;font-size:15px;font-weight:400;color:#1f2430;-webkit-text-stroke:0.53px #1f2430;letter-spacing:0.064px;">Execution ID</span>
<span class="t" style="left:978.10px;top:102.90px;font-size:15px;font-weight:400;color:#1f2430;-webkit-text-stroke:0.53px #1f2430;letter-spacing:0.937px;">9fd0e8b5-3458-4a92-b254-3...</span>
<span class="t" style="left:888.75px;top:150.75px;font-size:13.5px;font-weight:400;color:#1f2430;-webkit-text-stroke:0.50px #1f2430;letter-spacing:0.644px;">Statistics</span>
<span class="t" style="left:889.50px;top:177.25px;font-size:11.5px;font-weight:400;color:#2b3040;letter-spacing:0.304px;">Current status</span>
<span class="t" style="left:889.50px;top:197.25px;font-size:11.5px;font-weight:400;color:#2b3040;letter-spacing:0.210px;">Duration</span>
<span class="t" style="left:889.50px;top:217.75px;font-size:11.5px;font-weight:400;color:#2b3040;letter-spacing:0.282px;">Trigger</span>
<span class="t" style="left:1187.60px;top:176.75px;font-size:11.5px;font-weight:400;color:#2b3040;-webkit-text-stroke:0.62px #2b3040;letter-spacing:0.520px;">Success</span>
<span class="t" style="left:1222.25px;top:197.15px;font-size:11.5px;font-weight:400;color:#2b3040;-webkit-text-stroke:0.62px #2b3040;letter-spacing:-0.216px;">1s</span>
<span class="t" style="left:1194.25px;top:217.75px;font-size:11.5px;font-weight:400;color:#2b3040;-webkit-text-stroke:0.62px #2b3040;letter-spacing:0.444px;">manual</span>
<span class="t" style="left:888.75px;top:266.25px;font-size:13.5px;font-weight:400;color:#1f2430;-webkit-text-stroke:0.50px #1f2430;letter-spacing:0.506px;">Status</span>
<span class="t" style="left:888.75px;top:301.00px;font-size:11.5px;font-weight:400;color:#2b3040;-webkit-text-stroke:0.62px #2b3040;letter-spacing:0.659px;">2/12/2024</span>
<span class="t" style="left:900.25px;top:316.00px;font-size:11.5px;font-weight:400;color:#2b3040;letter-spacing:0.025px;">14:39:18</span>
<span class="t" style="left:1022.75px;top:301.00px;font-size:11.5px;font-weight:400;color:#2b3040;-webkit-text-stroke:0.62px #2b3040;letter-spacing:0.459px;">End block</span>
<span class="t" style="left:1023.25px;top:315.40px;font-size:11.5px;font-weight:400;color:#3c4150;letter-spacing:0.079px;">Success</span>
<span class="t" style="left:888.75px;top:353.95px;font-size:11.5px;font-weight:400;color:#2b3040;-webkit-text-stroke:0.62px #2b3040;letter-spacing:0.659px;">2/12/2024</span>
<span class="t" style="left:900.25px;top:368.95px;font-size:11.5px;font-weight:400;color:#2b3040;letter-spacing:0.025px;">14:39:18</span>
<span class="t" style="left:1022.75px;top:353.95px;font-size:11.5px;font-weight:400;color:#2b3040;-webkit-text-stroke:0.62px #2b3040;letter-spacing:-0.163px;">OK?</span>
<span class="t" style="left:1023.25px;top:368.35px;font-size:11.5px;font-weight:400;color:#3c4150;letter-spacing:-0.288px;">Yes</span>
<span class="t" style="left:888.75px;top:406.90px;font-size:11.5px;font-weight:400;color:#2b3040;-webkit-text-stroke:0.62px #2b3040;letter-spacing:0.659px;">2/12/2024</span>
<span class="t" style="left:900.25px;top:421.90px;font-size:11.5px;font-weight:400;color:#2b3040;letter-spacing:0.025px;">14:39:18</span>
<span class="t" style="left:1022.75px;top:406.90px;font-size:11.5px;font-weight:400;color:#2b3040;-webkit-text-stroke:0.62px #2b3040;letter-spacing:0.537px;">get user uuid</span>
<span class="t" style="left:1023.25px;top:421.30px;font-size:11.5px;font-weight:400;color:#3c4150;letter-spacing:0.079px;">Success</span>
<span class="t" style="left:888.75px;top:459.85px;font-size:11.5px;font-weight:400;color:#2b3040;-webkit-text-stroke:0.62px #2b3040;letter-spacing:0.659px;">2/12/2024</span>
<span class="t" style="left:900.25px;top:474.85px;font-size:11.5px;font-weight:400;color:#2b3040;letter-spacing:0.025px;">14:39:18</span>
<span class="t" style="left:1022.75px;top:459.85px;font-size:11.5px;font-weight:400;color:#2b3040;-webkit-text-stroke:0.62px #2b3040;letter-spacing:0.445px;">Was user found in the group</span>
<span class="t" style="left:1023.25px;top:474.25px;font-size:11.5px;font-weight:400;color:#3c4150;letter-spacing:-0.288px;">Yes</span>
<span class="t" style="left:888.75px;top:512.80px;font-size:11.5px;font-weight:400;color:#2b3040;-webkit-text-stroke:0.62px #2b3040;letter-spacing:0.659px;">2/12/2024</span>
<span class="t" style="left:900.25px;top:527.80px;font-size:11.5px;font-weight:400;color:#2b3040;letter-spacing:0.025px;">14:39:18</span>
<span class="t" style="left:1022.75px;top:512.80px;font-size:11.5px;font-weight:400;color:#2b3040;-webkit-text-stroke:0.62px #2b3040;letter-spacing:0.587px;">Is query supported</span>
<span class="t" style="left:1023.25px;top:527.20px;font-size:11.5px;font-weight:400;color:#3c4150;letter-spacing:-0.288px;">Yes</span>
<span class="t" style="left:888.75px;top:565.75px;font-size:11.5px;font-weight:400;color:#2b3040;-webkit-text-stroke:0.62px #2b3040;letter-spacing:0.659px;">2/12/2024</span>
<span class="t" style="left:900.25px;top:580.75px;font-size:11.5px;font-weight:400;color:#2b3040;letter-spacing:0.025px;">14:39:17</span>
<span class="t" style="left:1022.75px;top:565.75px;font-size:11.5px;font-weight:400;color:#2b3040;-webkit-text-stroke:0.62px #2b3040;letter-spacing:0.455px;">check if user is in the group</span>
<span class="t" style="left:1023.25px;top:580.15px;font-size:11.5px;font-weight:400;color:#3c4150;letter-spacing:0.079px;">Success</span>
<span class="t" style="left:888.75px;top:618.70px;font-size:11.5px;font-weight:400;color:#2b3040;-webkit-text-stroke:0.62px #2b3040;letter-spacing:0.659px;">2/12/2024</span>
<span class="t" style="left:900.25px;top:633.70px;font-size:11.5px;font-weight:400;color:#2b3040;letter-spacing:0.025px;">14:39:17</span>
<span class="t" style="left:1022.75px;top:618.70px;font-size:11.5px;font-weight:400;color:#2b3040;-webkit-text-stroke:0.62px #2b3040;letter-spacing:0.503px;">Add device to the group</span>
<span class="t" style="left:1023.25px;top:633.10px;font-size:11.5px;font-weight:400;color:#3c4150;letter-spacing:0.079px;">Success</span>
</div>
<svg id="corners" class="abs" viewBox="0 0 1280 675">
<path d="M110.6 549.2V531Q110.6 528.3 112.95 528.3Q115.3 528.3 115.3 531V539.2Q115.4 537 117.3 537Q119.2 537.1 119.2 539.6Q119.4 538.1 121.3 538.1Q123.3 538.2 123.3 540.7Q123.6 539.5 125.5 539.6Q127.7 539.9 127.7 543.1V551Q127.7 557 124.6 560Q122.2 562.3 118.4 562.3Q114 562.3 111.4 559.3L103 549.4Q101.2 547.2 102.7 546.1Q104.3 545.1 106.4 546.8Z" fill="#fbfbfb" stroke="#111" stroke-width="1.35" stroke-linejoin="round"/>
<path d="M115.3 539V545.2M119.2 539.6V545.2M123.3 540.7V545.2" stroke="#111" stroke-width="1.25" fill="none" stroke-linecap="round"/>
<path d="M0 665V675H7A7 10 0 0 1 0 665Z" fill="#0c0d08"/>
<path d="M1280 670.5V675H1272.5Q1278.5 674.5 1280 670.5Z" fill="#0c0d08"/>
</svg>
<div id="topline" class="abs"></div>
</div>
</body>
</html>
